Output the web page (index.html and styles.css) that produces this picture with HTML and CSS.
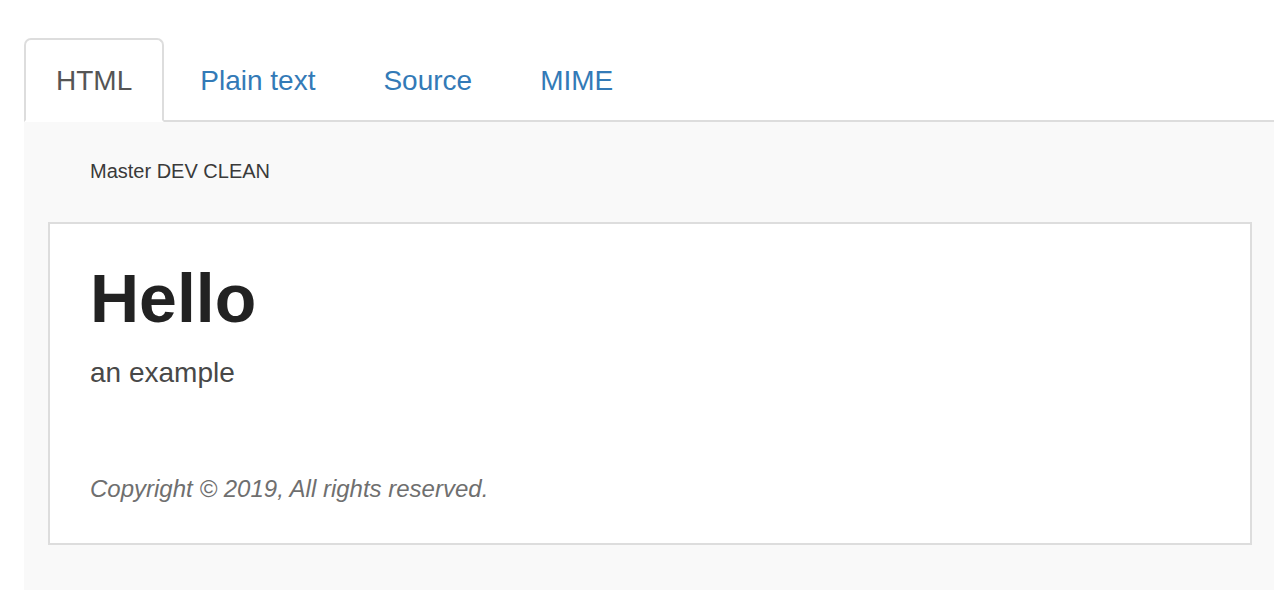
FILE: index.html
```html
<!DOCTYPE html>
<html>
<head>
<meta charset="utf-8">
<title>Preview</title>
<link rel="stylesheet" href="styles.css">
</head>
<body>
<div class="page">
  <ul class="tabs">
    <li class="tab active"><a>HTML</a></li>
    <li class="tab"><a>Plain text</a></li>
    <li class="tab"><a>Source</a></li>
    <li class="tab"><a>MIME</a></li>
  </ul>
  <div class="panel">
    <div class="subject">Master DEV CLEAN</div>
    <div class="card">
      <h1 class="title">Hello</h1>
      <p class="lead">an example</p>
      <p class="copy">Copyright © 2019, All rights reserved.</p>
    </div>
  </div>
</div>
</body>
</html>
```

FILE: styles.css
```css
html, body {
  margin: 0;
  padding: 0;
  background: #fff;
  font-family: "Liberation Sans", Arial, Helvetica, sans-serif;
}

.page {
  padding: 38px 12px 0 24px;
}

.tabs {
  list-style: none;
  margin: 0;
  padding: 0;
  display: flex;
  border-bottom: 2px solid #ddd;
}

.tab {
  margin-right: 4px;
  margin-bottom: -2px;
}

.tab a {
  display: block;
  padding: 21px 30px 19px;
  line-height: 40px;
  font-size: 28px;
  color: #337ab7;
  border: 2px solid transparent;
  border-radius: 7px 7px 0 0;
}

.tab.active a {
  color: #555;
  background: #fff;
  border-color: #ddd #ddd transparent;
}

.panel {
  background: #f9f9f9;
  padding: 35px 22px 46px 24px;
}

.subject {
  font-size: 20px;
  line-height: 28px;
  color: #3a3a3a;
  padding-left: 42px;
  margin-bottom: 37px;
}

.card {
  background: #fff;
  border: 2px solid #ddd;
  padding: 37px 40px 37px 40px;
}

.title {
  margin: 0;
  font-size: 68px;
  line-height: 1.1;
  font-weight: bold;
  color: #222;
}

.lead {
  margin: 17px 0 0;
  font-size: 28px;
  line-height: 40px;
  color: #484848;
}

.copy {
  margin: 79px 0 0;
  font-size: 24px;
  line-height: 34px;
  font-style: italic;
  color: #6f6f6f;
}
```
